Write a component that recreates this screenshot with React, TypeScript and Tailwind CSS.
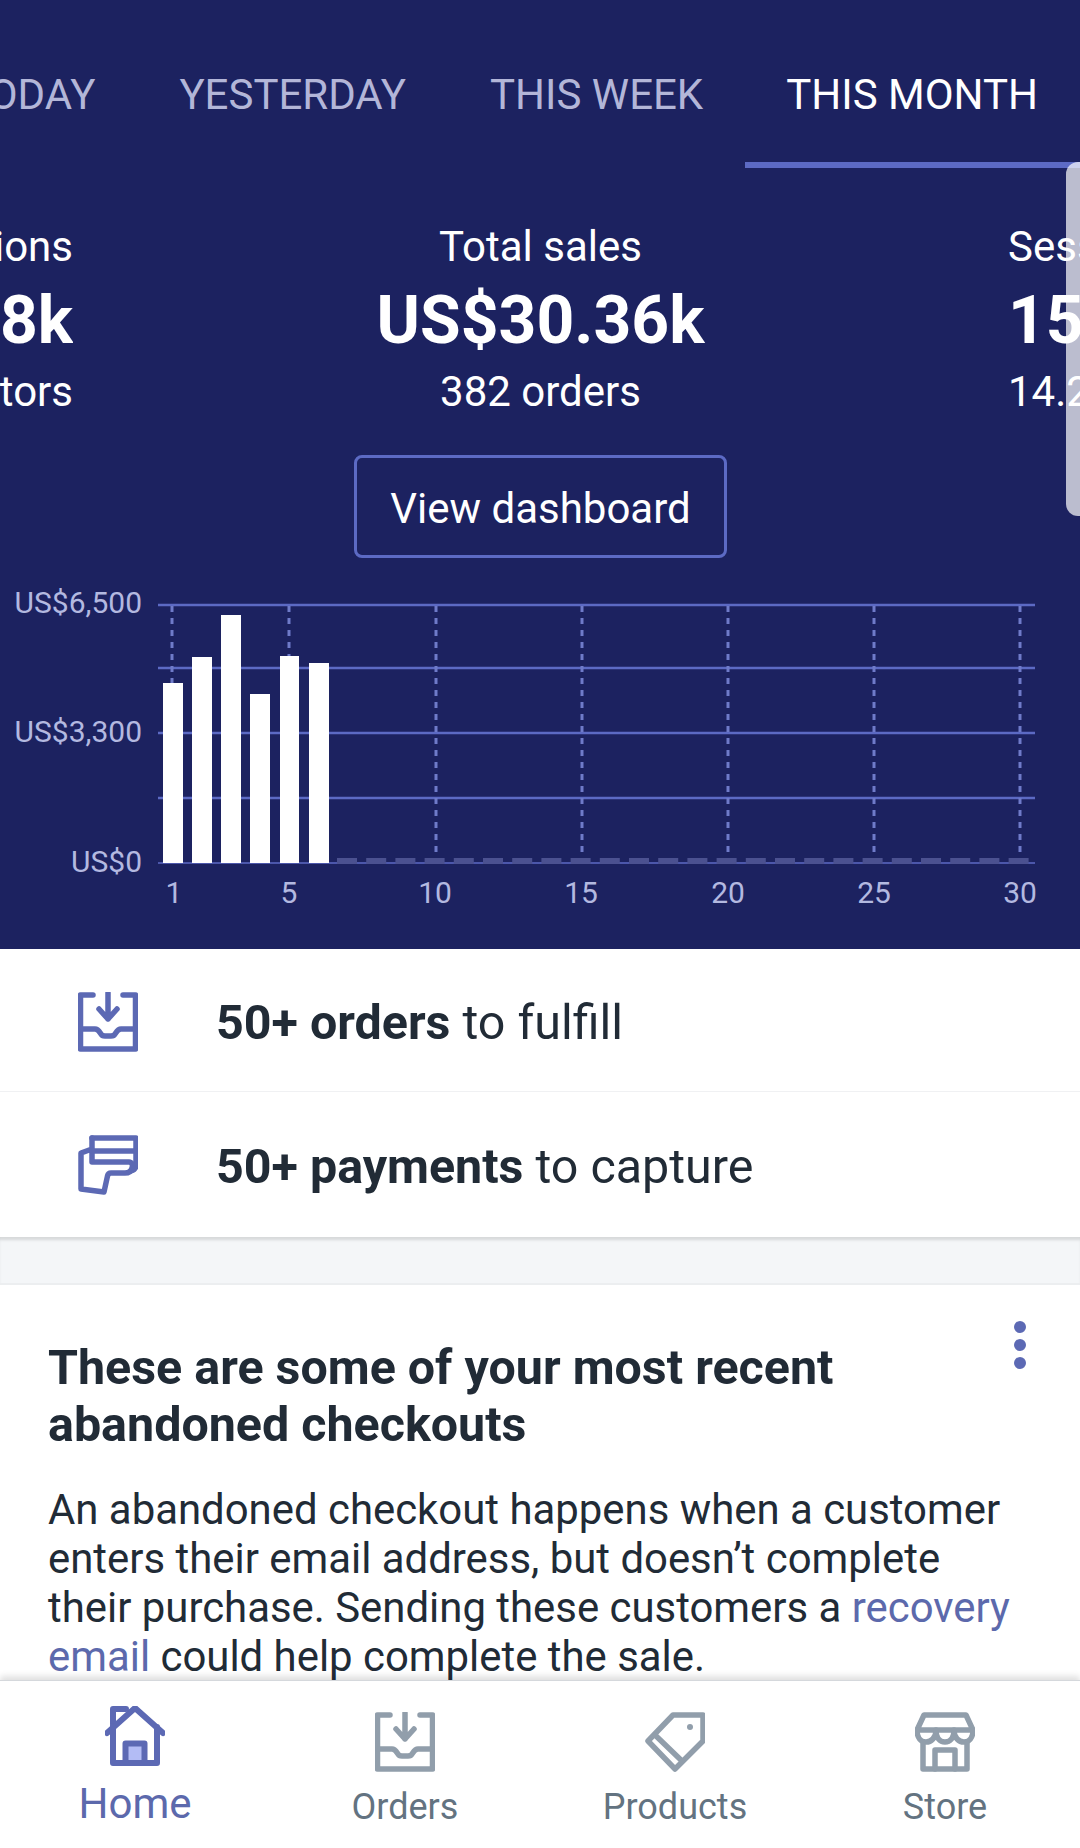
const bars = [
  { x: 163, w: 20, top: 683 },
  { x: 192, w: 20, top: 657 },
  { x: 221, w: 20, top: 615 },
  { x: 250, w: 20, top: 694 },
  { x: 280, w: 19, top: 656 },
  { x: 309, w: 20, top: 663 },
]
const hLines = [605, 668, 733, 798]
const xTicks = [
  { label: '1', x: 172, labelX: 174 },
  { label: '5', x: 289, labelX: 289 },
  { label: '10', x: 436, labelX: 435 },
  { label: '15', x: 582, labelX: 581 },
  { label: '20', x: 728, labelX: 728 },
  { label: '25', x: 874, labelX: 874 },
  { label: '30', x: 1020, labelX: 1020 },
]
const yTicks = [
  { label: 'US$6,500', y: 603 },
  { label: 'US$3,300', y: 732 },
  { label: 'US$0', y: 862 },
]

// chart coordinates are page coordinates, the svg starts at y=580
function Chart() {
  return (
    <svg width="1080" height="369" viewBox="0 580 1080 369" className="block">
      {hLines.map((y) => (
        <line key={y} x1="158" x2="1035" y1={y} y2={y} stroke="#5c6ac4" strokeWidth="2.5" />
      ))}
      <line x1="158" x2="1035" y1="863" y2="863" stroke="#5c6ac4" strokeWidth="1.5" />
      {xTicks.map((t) => (
        <line key={t.label} x1={t.x} x2={t.x} y1="606" y2="858" stroke="#6f7bc9" strokeWidth="3" strokeDasharray="6 6" />
      ))}
      {Array.from({ length: 24 }).map((_, i) => (
        <rect key={i} x={337 + i * 29.2} y="858" width="20" height="6" fill="#4b5190" />
      ))}
      {bars.map((b) => (
        <rect key={b.x} x={b.x} y={b.top} width={b.w} height={863 - b.top} fill="#ffffff" />
      ))}
      {yTicks.map((t) => (
        <text key={t.label} x="142" y={t.y + 10} textAnchor="end" fontSize="30" fill="#b3b9e0" fontFamily="Roboto, sans-serif">
          {t.label}
        </text>
      ))}
      {xTicks.map((t) => (
        <text key={t.label} x={t.labelX} y="903" textAnchor="middle" fontSize="30" fill="#b3b9e0" fontFamily="Roboto, sans-serif">
          {t.label}
        </text>
      ))}
    </svg>
  )
}

function InboxIcon({ color }: { color: string }) {
  return (
    <svg width="60" height="60" viewBox="0 0 60 60" fill="none" stroke={color} strokeWidth="5.500" strokeLinecap="round" strokeLinejoin="round">
      <path d="M15 3H2.500v54h55V3H45" />
      <path d="M3 37h14c3 0 4 2 6 5 1 2 3 2 4 2h6c1 0 3 0 4-2 2-3 3-5 6-5h14" />
      <path d="M30 1v26M21 17l9 10 9-10" />
    </svg>
  )
}

function PaymentIcon() {
  return (
    <svg width="60" height="60" viewBox="0 0 60 60" fill="none" stroke="#5c69b4" strokeWidth="5.500" strokeLinecap="round" strokeLinejoin="round">
      <path d="M14 3h44v27c0 3-2 5-5 6" />
      <path d="M14 3v24h37c3 0 4 3 3 6-1 4-4 5-7 5H33c-2 0-3 1-3.500 3L26 57 3 54V18l11-4" />
      <path d="M14 16h44" />
    </svg>
  )
}

function HomeIcon() {
  return (
    <svg width="60" height="60" viewBox="0 0 60 60" fill="none" stroke="#5c69b4" strokeWidth="6" strokeLinecap="round" strokeLinejoin="round">
      <rect x="23" y="40" width="14" height="15" fill="#b3bcf5" stroke="none" />
      <path d="M2 27 30 2l28 25" />
      <path d="M8 18V3h13" />
      <path d="M8 20v37h44V21" />
      <path d="M20.500 56V37.500h19V56" />
    </svg>
  )
}

function TagIcon() {
  return (
    <svg width="60" height="60" viewBox="0 0 60 60" fill="none" stroke="#919eab" strokeWidth="5.500" strokeLinecap="round" strokeLinejoin="round">
      <path d="M58 3H28L3 29l27 28 28-28z" />
      <path d="M10 23l27 26" />
      <circle cx="45" cy="15" r="3" fill="#919eab" stroke="none" />
    </svg>
  )
}

function StoreIcon() {
  return (
    <svg width="60" height="60" viewBox="0 0 60 60" fill="none" stroke="#919eab" strokeWidth="5.500" strokeLinecap="round" strokeLinejoin="round">
      <path d="M9 3h42l7 15H2z" />
      <path d="M2 18c0 8 4 12 9 12s10-4 10-12c0 8 4 12 9 12s9-4 9-12c0 8 5 12 10 12s9-4 9-12" />
      <path d="M8 30v27h44V30" />
      <path d="M20 57V38h20v19" />
    </svg>
  )
}

function NavItem({ label, active, children }: { label: string; active?: boolean; children: React.ReactNode }) {
  return (
    <div className="flex flex-col items-center">
      <div className={active ? 'h-[60px] mt-[25px]' : 'h-[60px] mt-[31px]'}>{children}</div>
      {active ? (
        <span className="mt-[13px] text-[42px] leading-[50px] text-[#5c69ac]">{label}</span>
      ) : (
        <span className="mt-[13px] text-[36px] leading-[44px] text-[#637381]">{label}</span>
      )}
    </div>
  )
}

export default function App() {
  return (
    <div className="relative flex h-[1848px] w-[1080px] flex-col overflow-hidden bg-white font-['Roboto',sans-serif] text-[#212b36]">
      <div className="min-h-0 flex-1 overflow-hidden">
        <div className="h-[949px] bg-[#1c2260] text-white">
          <div className="flex h-[168px] justify-end overflow-hidden text-[42px] leading-[48px] text-[#b3b6d8]">
            {['TODAY', 'YESTERDAY', 'THIS WEEK'].map((tab) => (
              <div key={tab} className="shrink-0 px-[42px] pt-[71px] whitespace-nowrap">
                {tab}
              </div>
            ))}
            <div className="shrink-0 border-b-[6px] border-[#5c6ac4] pt-[71px] pr-[42px] pl-[41px] whitespace-nowrap text-white">THIS MONTH</div>
          </div>

          <div className="mt-[55px] grid grid-cols-[73px_1fr_72px]">
            <div className="flex flex-col items-end overflow-hidden whitespace-nowrap">
              <div className="text-[42px] leading-[48px]">Sessions</div>
              <div className="mt-[12px] text-[66px] leading-[76px] font-bold">48.8k</div>
              <div className="mt-[9px] text-[42px] leading-[48px]">41.2k visitors</div>
            </div>
            <div className="flex flex-col items-center">
              <div className="text-[42px] leading-[48px]">Total sales</div>
              <div className="mt-[12px] text-[66px] leading-[76px] font-bold">US$30.36k</div>
              <div className="mt-[9px] text-[42px] leading-[48px]">382 orders</div>
              <button className="mt-[39px] h-[103px] w-[373px] rounded-[8px] border-[3px] border-[#5c6ac4] pt-[3px] text-[42px]">View dashboard</button>
            </div>
            <div className="overflow-hidden whitespace-nowrap">
              <div className="text-[42px] leading-[48px]">Sessions</div>
              <div className="mt-[12px] text-[66px] leading-[76px] font-bold">15.6k</div>
              <div className="mt-[9px] text-[42px] leading-[48px]">14.2k visitors</div>
            </div>
          </div>

          <div className="mt-[22px]">
            <Chart />
          </div>
        </div>

        <div className="bg-white">
          <div className="flex h-[143px] items-center border-b border-[#f0f1f3] pl-[78px]">
            <div className="pt-[3px]">
              <InboxIcon color="#5c69b4" />
            </div>
            <div className="ml-[78px] pt-[6px] text-[48.400px]">
              <span className="font-bold">50+ orders</span> to fulfill
            </div>
          </div>
          <div className="flex h-[145px] items-center pl-[78px]">
            <PaymentIcon />
            <div className="ml-[78px] pt-[6px] text-[48.400px]">
              <span className="font-bold">50+ payments</span> to capture
            </div>
          </div>
        </div>

        <div className="h-[48px] border-b-2 border-[#eceef0] bg-[#f4f6f8] shadow-[inset_0_4px_3px_-1px_rgba(0,0,0,0.12)]" />

        <div className="relative bg-white px-[48px] pt-[55px]">
          <div className="absolute top-[36px] right-[54px] flex flex-col gap-[6px]">
            <span className="h-[12px] w-[12px] rounded-full bg-[#5c69b4]" />
            <span className="h-[12px] w-[12px] rounded-full bg-[#5c69b4]" />
            <span className="h-[12px] w-[12px] rounded-full bg-[#5c69b4]" />
          </div>
          <h2 className="w-[860px] text-[48.400px] leading-[56.500px] font-bold">These are some of your most recent abandoned checkouts</h2>
          <p className="mt-[32px] w-[980px] text-[41.900px] leading-[49px]">
            An abandoned checkout happens when a customer enters their email address, but doesn’t complete their purchase. Sending these customers a{' '}
            <span className="text-[#5c69ac]">recovery email</span> could help complete the sale.
          </p>
        </div>
      </div>

      <div className="relative z-10 grid h-[168px] shrink-0 grid-cols-4 border-t border-[#d5d8dc] bg-white shadow-[0_-4px_6px_rgba(0,0,0,0.12)]">
        <NavItem label="Home" active>
          <HomeIcon />
        </NavItem>
        <NavItem label="Orders">
          <InboxIcon color="#919eab" />
        </NavItem>
        <NavItem label="Products">
          <TagIcon />
        </NavItem>
        <NavItem label="Store">
          <StoreIcon />
        </NavItem>
      </div>

      {/* scrollbar handle lying over the stats */}
      <div className="absolute top-[162px] right-0 h-[354px] w-[14px] rounded-l-[12px] bg-white/70" />
    </div>
  )
}
